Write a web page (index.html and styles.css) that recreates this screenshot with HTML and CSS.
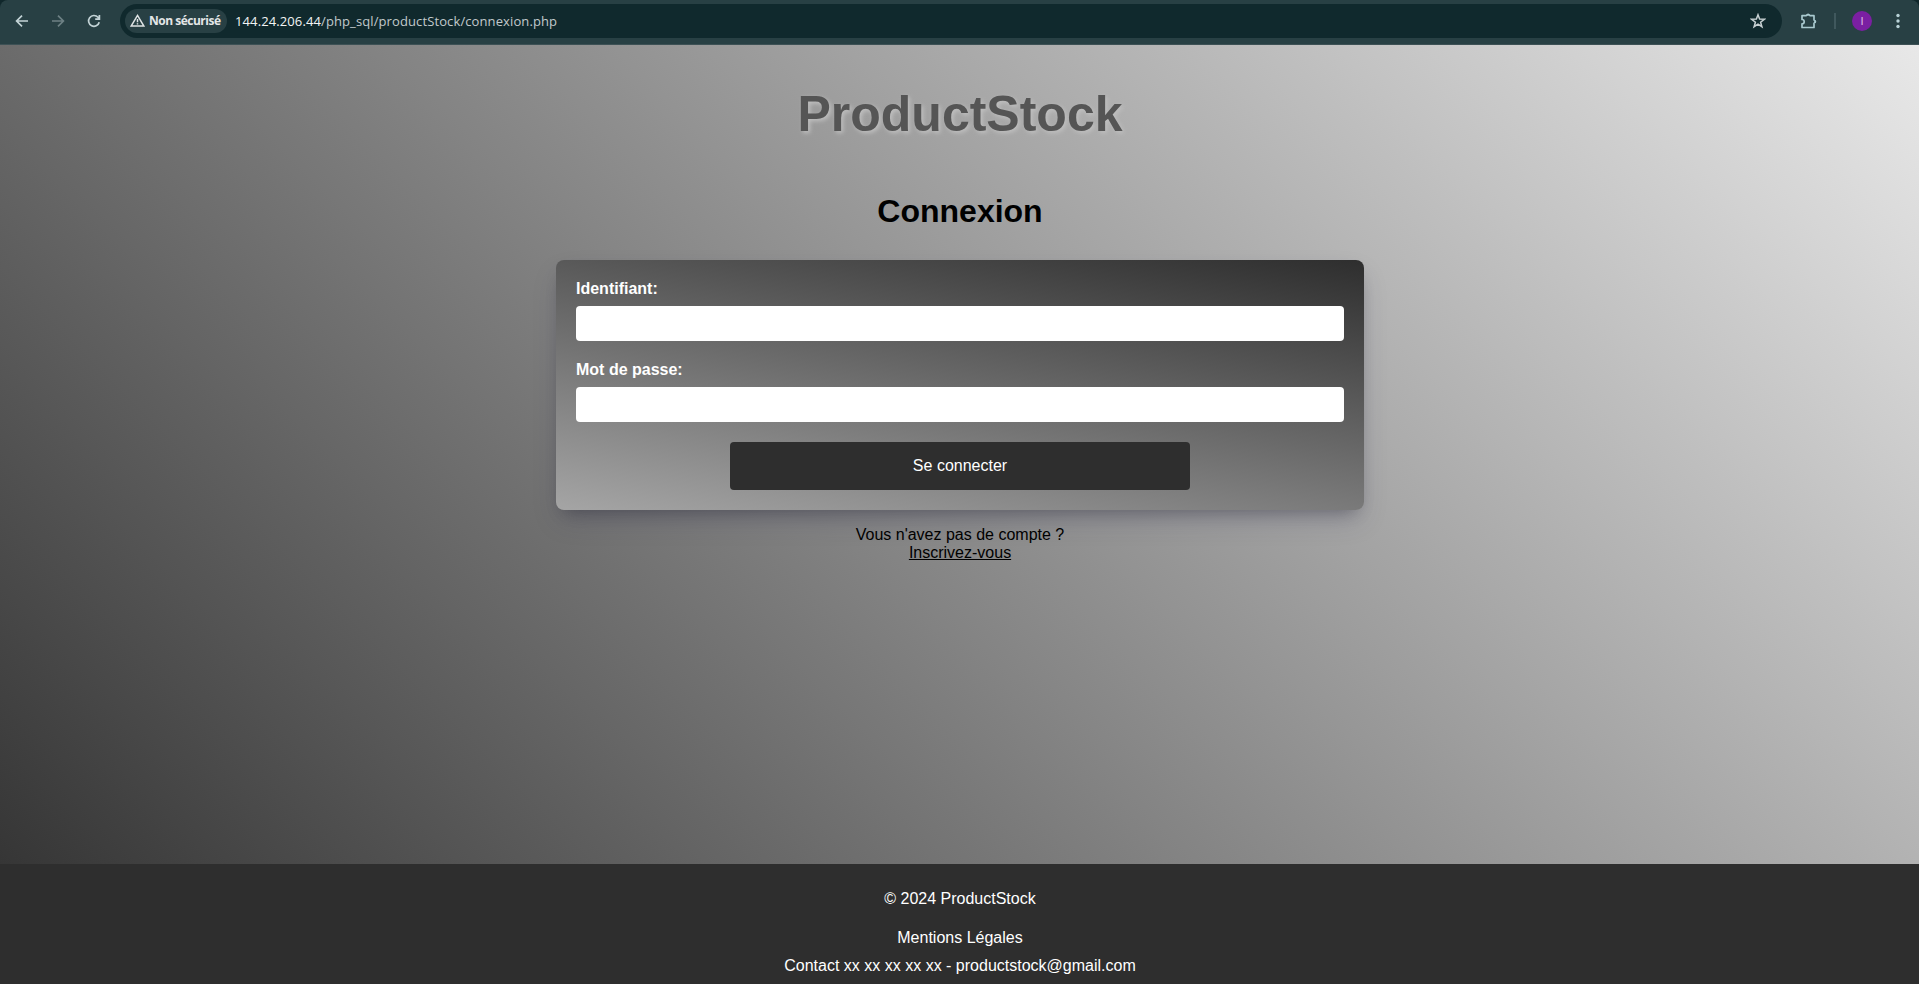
FILE: index.html
```html
<!DOCTYPE html>
<html lang="fr">
<head>
<meta charset="utf-8">
<title>ProductStock</title>
<link rel="stylesheet" href="styles.css">
</head>
<body>
<div class="toolbar">
  <div class="nav">
    <svg class="ico" viewBox="0 0 16 16"><path d="M14 8H3M8 2.6 2.6 8 8 13.400"/></svg>
    <svg class="ico dim" viewBox="0 0 16 16"><path d="M2 8h11M8 2.600 13.400 8 8 13.400"/></svg>
    <svg class="ico" viewBox="0 0 16 16"><path d="M13.200 9.200A5.400 5.400 0 1 1 12 4.300L13.200 5.700M13.400 2v4.200H9.200"/></svg>
  </div>
  <div class="omnibox">
    <div class="chip">
      <svg class="warn" viewBox="0 0 16 14"><path d="M8 1.600 14.700 12.800H1.300ZM8 5.500v3.500M8 10v1.400"/></svg>
      <span class="chip-text">Non sécurisé</span>
    </div>
    <span class="url"><span class="host">144.24.206.44</span>/php_sql/productStock/connexion.php</span>
    <svg class="star" viewBox="0 0 16 16"><path d="M8 1.800 9.600 6.100 14.300 6.300 10.600 9.200 11.900 13.700 8 11.100 4.100 13.700 5.400 9.200 1.700 6.300 6.400 6.100Z"/></svg>
  </div>
  <svg class="puzzle" viewBox="0 0 18 18"><path d="M2 3.700H6.300A1.900 1.400 0 0 1 9.900 3.700H14V8A1.700 1.700 0 0 1 14 11.200V15.500H2V11.900A2.200 2.200 0 0 0 2 7.500Z"/><path class="knob" d="M6.400 3.200a1.700 1.700 0 0 1 3.400 0zM14.600 7.900a1.700 1.700 0 0 1 0 3.400z"/></svg>
  <span class="divider"></span>
  <span class="avatar">I</span>
  <svg class="dots" viewBox="0 0 4 16"><circle cx="2" cy="2.500" r="1.700"/><circle cx="2" cy="8" r="1.700"/><circle cx="2" cy="13.500" r="1.700"/></svg>
</div>
<div class="page">
  <header class="brand">ProductStock</header>
  <main class="main">
    <h1 class="heading">Connexion</h1>
    <form class="login">
      <label class="label" for="user">Identifiant:</label>
      <input class="field" id="user" type="text">
      <label class="label" for="pass">Mot de passe:</label>
      <input class="field" id="pass" type="password">
      <button class="submit" type="button">Se connecter</button>
    </form>
    <p class="signup">Vous n'avez pas de compte ?<br><a class="link" href="#">Inscrivez-vous</a></p>
  </main>
  <footer class="footer">
    <p class="copy">© 2024 ProductStock</p>
    <p class="legal">Mentions Légales</p>
    <p class="contact">Contact xx xx xx xx xx - productstock@gmail.com</p>
  </footer>
</div>
</body>
</html>
```
FILE: styles.css
```css
* { box-sizing: border-box; }
body {
  margin: 0;
  height: 984px;
  display: flex;
  flex-direction: column;
  overflow: hidden;
  background: #10272b;
  font-family: "Liberation Sans", Arial, sans-serif;
  font-size: 16px;
}
svg { display: block; flex: none; fill: none; stroke-linejoin: miter; }
.toolbar {
  height: 45px;
  flex: none;
  display: flex;
  align-items: center;
  padding: 0 19px 3px 14px;
  background: #284044;
  border-bottom: 1px solid #3d5155;
  border-radius: 8px 8px 0 0;
  font-family: "Open Sans", "Noto Sans", sans-serif;
}
.nav { display: flex; gap: 20px; width: 106px; }
.ico { width: 16px; height: 16px; stroke: #c3d3d6; stroke-width: 1.7; }
.dim { stroke: #6d8084; }
.omnibox {
  flex: 1;
  height: 34px;
  display: flex;
  align-items: center;
  padding: 0 16px 0 5px;
  border-radius: 17px;
  background: #10292d;
}
.chip {
  width: 102px;
  height: 24px;
  display: flex;
  align-items: center;
  gap: 4px;
  padding-left: 5px;
  border-radius: 12px;
  background: #284044;
}
.warn { width: 15px; height: 13px; stroke: #dfe3e4; stroke-width: 1.6; }
.chip-text { color: #e3e6e7; font-size: 12px; font-weight: 700; letter-spacing: -0.5px; white-space: nowrap; }
.url { flex: 1; margin-left: 8px; color: #c2cacc; font-size: 13px; letter-spacing: 0.11px; white-space: nowrap; }
.host { color: #f2f4f4; }
.star { width: 16px; height: 16px; stroke: #c7d0d2; stroke-width: 1.5; }
.puzzle { width: 18px; height: 18px; margin-left: 18px; stroke: #a9c9cf; stroke-width: 1.7; stroke-linejoin: round; }
.knob { fill: #a9c9cf; stroke: none; }
.divider { width: 2px; height: 16px; margin-left: 16px; background: #40585d; }
.avatar {
  width: 20px;
  height: 20px;
  margin: 0 24px 0 16px;
  border-radius: 50%;
  background: #7b1fa2;
  color: #e3cfea;
  font-size: 11px;
  line-height: 20px;
  text-align: center;
}
.dots { width: 4px; height: 16px; fill: #b9d3d8; }
.page {
  flex: 1;
  display: flex;
  flex-direction: column;
  background: linear-gradient(45deg, #2e2e2e, #e8e8e8);
}
.brand {
  padding: 41px 0 0 1px;
  color: #555;
  font-size: 50px;
  font-weight: bold;
  line-height: 57px;
  text-align: center;
  text-shadow: 2px 2px 4px #c0c0c0;
}
.main { flex: 1; display: flex; flex-direction: column; align-items: center; padding: 50px 0 0 1px; }
.heading { margin: 0; font-size: 32px; line-height: 37px; }
.login {
  width: 808px;
  height: 250px;
  display: flex;
  flex-direction: column;
  margin-top: 30px;
  padding: 20px;
  border-radius: 8px;
  background: linear-gradient(10deg, #a5a5a5, #2e2e2e);
  box-shadow: rgba(50, 50, 93, 0.25) 0 13px 27px -5px, rgba(0, 0, 0, 0.3) 0 8px 16px -8px;
}
.label { margin-bottom: 8px; color: #fff; font-weight: bold; line-height: 18px; }
.field { height: 35px; margin: 0 0 20px; padding: 10px; border: 0; border-radius: 4px; background: #fff; }
.submit {
  width: 460px;
  height: 48px;
  align-self: center;
  border: 0;
  border-radius: 4px;
  background: #2e2e2e;
  color: #fff;
  font: inherit;
}
.signup { margin: 16px 0 0; line-height: 18px; text-align: center; }
.link { color: #000; }
.footer {
  height: 120px;
  padding: 26px 0 0 1px;
  background: #2e2e2e;
  color: #fff;
  line-height: 18px;
  text-align: center;
}
.copy { margin: 0 0 21px; }
.legal { margin: 0 0 10px; }
.contact { margin: 0; }
```
